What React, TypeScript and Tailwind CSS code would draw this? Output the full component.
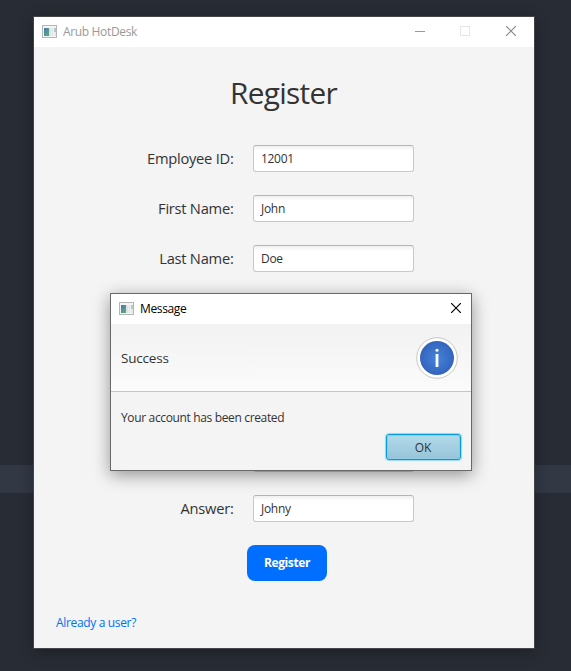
import React from "react";

const AppIcon = () => (
  <svg width="16" height="14" viewBox="0 0 16 14" shapeRendering="crispEdges">
    <defs>
      <linearGradient id="pane" x1="0" y1="0" x2="0.6" y2="1">
        <stop offset="0" stopColor="#4a78a8" />
        <stop offset="1" stopColor="#55a886" />
      </linearGradient>
    </defs>
    <rect x="0.5" y="0.5" width="14" height="12" fill="#f4f4f4" stroke="#b3b6ba" />
    <rect x="2" y="3" width="5" height="8" fill="url(#pane)" />
    <rect x="7" y="3" width="4" height="8" fill="#dfe1e4" />
    <rect x="9" y="3" width="1" height="8" fill="#eeeff0" />
    <rect x="12" y="3" width="2" height="4" fill="#a5cfc4" />
    <rect x="12" y="7" width="2" height="4" fill="#e6e8ea" />
  </svg>
);

const CloseIcon = ({ color }: { color: string }) => (
  <svg width="10" height="10" viewBox="0 0 10 10" stroke={color} strokeWidth="1.15">
    <path d="M0 0L10 10M10 0L0 10" />
  </svg>
);

const Field = ({ label, value }: { label: string; value: string }) => (
  <div className="flex h-[27px] shrink-0 items-center">
    <div className="w-[200px] pr-[0.5px] text-right text-[14.7px] leading-[27px] tracking-[-0.26px] whitespace-nowrap text-[#333]">
      {label}
    </div>
    <div className="ml-[19px] h-[27px] w-[161px] rounded-[3px] border border-[#c8c8c8] border-t-[#b4b4b4] bg-white bg-linear-to-b from-[#f0f0f0] to-white to-[5px] pl-[7px] text-[12px] leading-[25px] tracking-[-0.3px] text-[#333]">
      {value}
    </div>
  </div>
);

export default function App() {
  return (
    <div className="relative h-[671px] w-[571px] overflow-hidden bg-[#282c34] font-['Open_Sans',sans-serif]">
      <div className="absolute top-[465px] left-0 h-[28px] w-full bg-[#323844]" />

      <div className="absolute top-[16px] left-[33px] flex h-[633px] w-[502px] flex-col border border-[#434549] bg-[#f4f4f4] shadow-[0_3px_14px_rgba(0,0,0,0.3)]">
        <div className="flex h-[30px] shrink-0 items-center bg-white pl-[8px] text-[12px] tracking-[-0.34px] text-[#999]">
          <AppIcon />
          <span className="ml-[5px]">Arub HotDesk</span>
          <div className="mr-[18px] mb-[2px] ml-auto flex items-center">
            <div className="mt-px h-px w-[10px] bg-[#999]" />
            <div className="mr-[36px] ml-[35px] h-[10px] w-[10px] border border-[#e6e6e6]" />
            <CloseIcon color="#888" />
          </div>
        </div>
        <h1 className="mt-[26px] h-[40px] shrink-0 pr-[1px] text-center text-[29.8px] leading-[40px] tracking-[-0.7px] text-[#333]">
          Register
        </h1>
        <div className="mt-[32px] flex shrink-0 flex-col gap-[23px]">
          <Field label="Employee ID:" value="12001" />
          <Field label="First Name:" value="John" />
          <Field label="Last Name:" value="Doe" />
          <Field label="" value="" />
          <Field label="" value="" />
          <Field label="" value="" />
          <Field label="" value="" />
          <Field label="Answer:" value="Johny" />
        </div>
        <button className="mt-[23px] ml-[213px] h-[36px] w-[80px] shrink-0 rounded-[8px] bg-[#006eff] text-[12px] font-bold tracking-[-0.38px] text-white">
          Register
        </button>
        <a className="mt-[33px] ml-[22px] text-[12px] leading-[18px] tracking-[-0.34px] text-[#0070f8]">Already a user?</a>
      </div>

      <div className="absolute top-[293px] left-[110px] flex h-[178px] w-[362px] flex-col border border-[#686868] bg-[#f4f4f4] shadow-[0_4px_16px_rgba(0,0,0,0.4)]">
        <div className="flex h-[30px] shrink-0 items-center bg-white pr-[10px] pl-[8px] text-[12px] tracking-[-0.36px] text-black">
          <AppIcon />
          <span className="ml-[5px]">Message</span>
          <div className="mb-[2px] ml-auto">
            <CloseIcon color="#000" />
          </div>
        </div>
        <div className="flex h-[68px] shrink-0 items-center justify-between border-b border-[#c4c4c4] bg-linear-to-b from-[#f2f2f2] to-[#fbfbfb] pr-[13px] pl-[10px] text-[13.5px] tracking-[-0.2px] text-[#333]">
          <span className="mt-[2px]">Success</span>
          <svg width="42" height="42" viewBox="0 0 42 42">
            <defs>
              <radialGradient id="info">
                <stop offset="0" stopColor="#4484d8" />
                <stop offset="1" stopColor="#3564be" />
              </radialGradient>
            </defs>
            <circle cx="21" cy="21" r="20.3" fill="#fff" stroke="#c8c8c8" />
            <circle cx="21" cy="21" r="17" fill="url(#info)" />
            <circle cx="21" cy="13.2" r="1.5" fill="#fff" />
            <rect x="19.6" y="17" width="2.8" height="13" fill="#fff" />
          </svg>
        </div>
        <div className="mt-[17px] pl-[10px] text-[12px] leading-[18px] tracking-[-0.35px] text-[#333]">
          Your account has been created
        </div>
        <button className="mt-[7px] mr-[10px] h-[26px] w-[75px] self-end rounded-[3px] border border-[#039ed3] bg-linear-to-b from-[#b2dbeb] to-[#98c3d8] pt-px pr-[1px] text-[12px] leading-[23px] tracking-[-0.2px] text-[#333] shadow-[0_0_1px_1px_#98d8ee,inset_0_0_0_1px_#8fcbe3]">
          OK
        </button>
      </div>
    </div>
  );
}
